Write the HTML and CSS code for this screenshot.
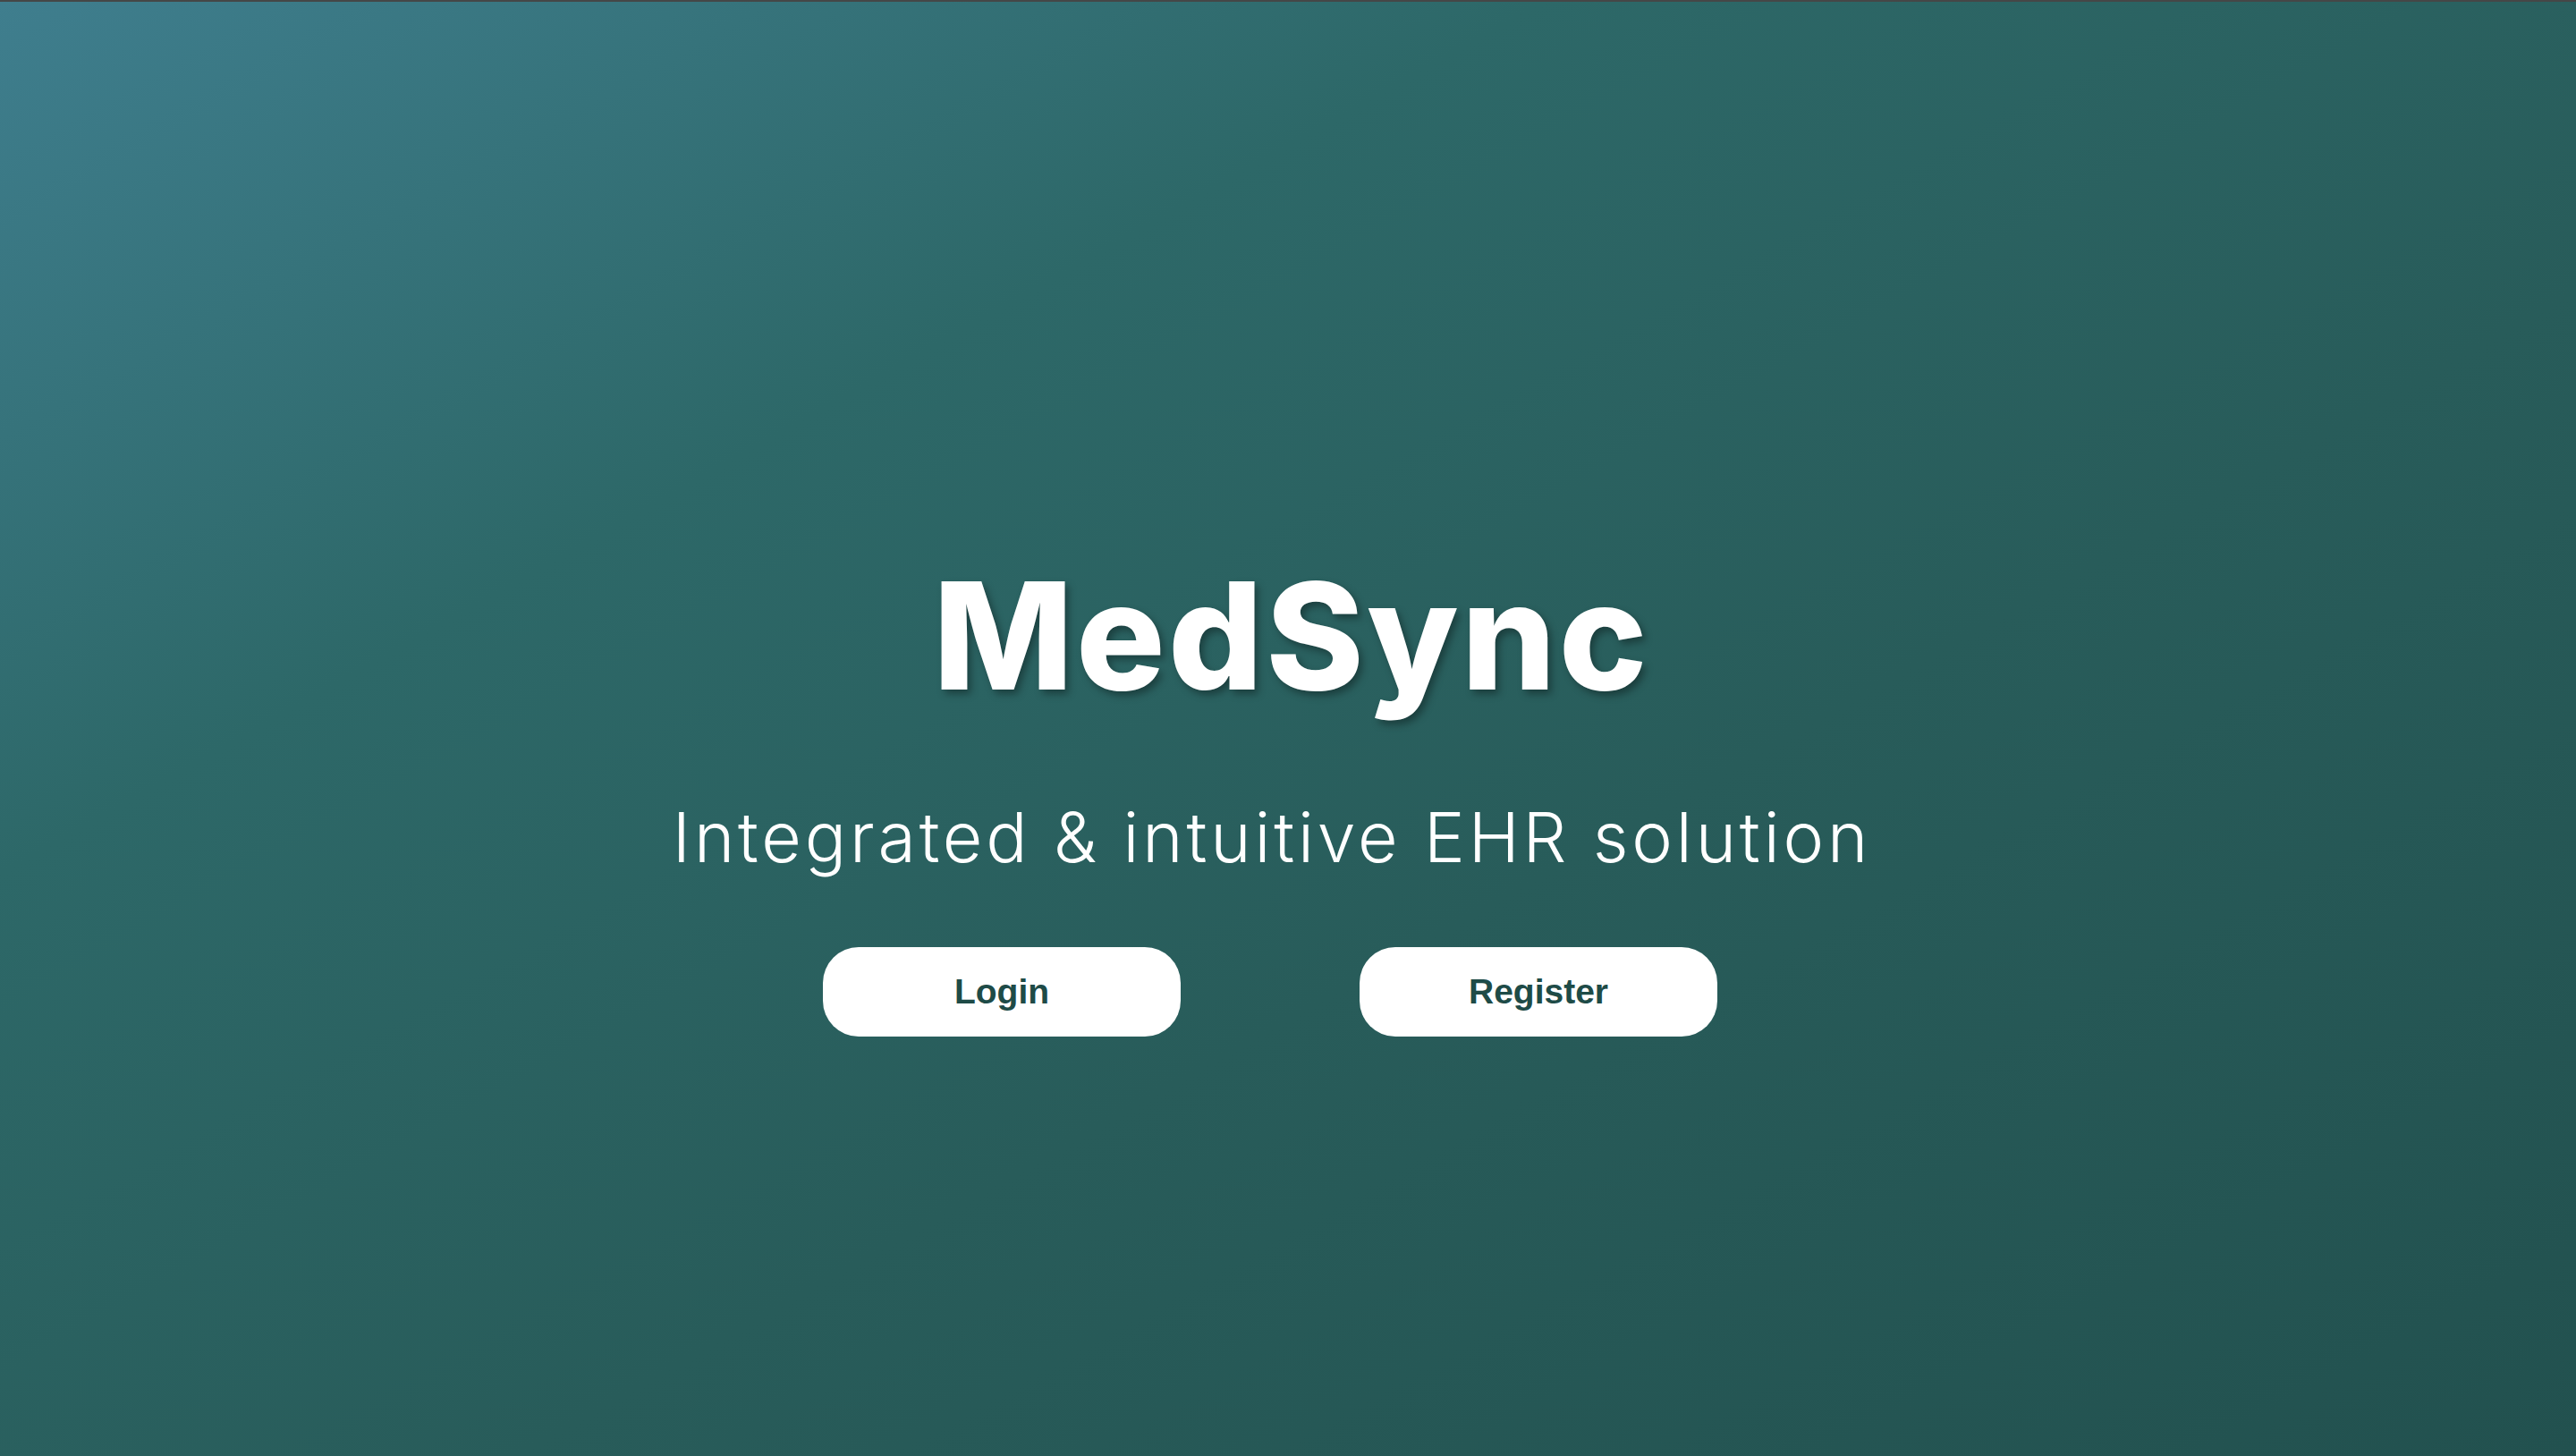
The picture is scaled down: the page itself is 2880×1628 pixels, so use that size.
FILE: index.html
```html
<!DOCTYPE html>
<html lang="en">
<head>
<meta charset="utf-8">
<title>MedSync</title>
<link rel="stylesheet" href="styles.css">
</head>
<body>
<main class="hero">
  <h1 class="title">MedSync</h1>
  <p class="subtitle">Integrated &amp; intuitive EHR solution</p>
  <div class="actions">
    <button class="btn" type="button">Login</button>
    <button class="btn" type="button">Register</button>
  </div>
</main>
</body>
</html>
```

FILE: styles.css
```css
* { box-sizing: border-box; }
html, body { margin: 0; height: 100%; }
body {
  border-top: 2px solid #454747;
  background: linear-gradient(to bottom right, #3f7e8e 0%, #2d6868 30%, #285c5a 60%, #22514f 100%);
  font-family: "Inter", "Liberation Sans", sans-serif;
  color: #fff;
}
.hero {
  height: 100%;
  display: flex;
  flex-direction: column;
  align-items: center;
  justify-content: center;
  padding-top: 140px;
}
.title {
  margin: 0;
  padding-left: 8px;
  font-family: "Inter", sans-serif;
  font-weight: 800;
  font-size: 166px;
  line-height: 1.2;
  letter-spacing: 3.3px;
  text-shadow: 4px 5px 8px rgba(0, 0, 0, 0.35);
}
.subtitle {
  margin: 80px 0 0;
  padding-right: 36px;
  font-family: "Inter", sans-serif;
  font-weight: 300;
  font-size: 77px;
  line-height: 1.2;
  letter-spacing: 3.85px;
}
.actions {
  margin-top: 76px;
  display: flex;
  gap: 200px;
  padding-right: 40px;
}
.btn {
  width: 400px;
  height: 100px;
  border: none;
  border-radius: 40px;
  background: #fff;
  color: #1e4b47;
  font-family: "Liberation Sans", Arial, sans-serif;
  font-weight: 700;
  font-size: 39px;
  cursor: pointer;
}
```
